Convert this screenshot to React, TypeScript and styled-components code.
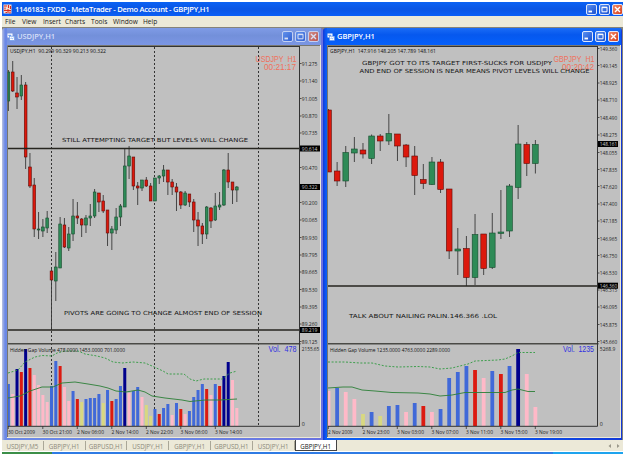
import React, { FC } from 'react';
import styled, { createGlobalStyle, css } from 'styled-components';

const GlobalStyle = createGlobalStyle`
  body {
    margin: 0;
    background: #ffffff;
    overflow: hidden;
    font-family: 'Open Sans', 'Liberation Sans', sans-serif;
  }
`;

const Screen = styled.div`
  box-sizing: border-box;
  width: 625px;
  height: 454px;
  padding: 2px 2px 0 2px;
  display: flex;
  flex-direction: column;
`;

const TitleBar = styled.header`
  height: 14px;
  flex: none;
  box-sizing: border-box;
  padding: 0 0 0 1px;
  display: flex;
  align-items: center;
  background: linear-gradient(#0a62f4, #0a55e4 50%, #0a5ff6);
`;

const AppTitle = styled.h1`
  flex: 1;
  margin: 0 0 0 3px;
  color: #ffffff;
  font-size: 7.6px;
  line-height: 14px;
  font-weight: 600;
  letter-spacing: -0.28px;
  white-space: pre;
`;

const MenuBar = styled.nav`
  height: 11px;
  flex: none;
  display: grid;
  grid-template-columns: 17px 21px 22px 26px 22px 30px 20px;
  padding-left: 3px;
  background: #ece9d8;
`;

const MenuItem = styled.span`
  color: #222222;
  font-size: 6.6px;
  line-height: 11px;
  white-space: nowrap;
`;

const Workspace = styled.main`
  box-sizing: border-box;
  width: 621px;
  height: 413px;
  flex: none;
  display: grid;
  grid-template-columns: 321px 299px;
  border-top: 1px solid #85837a;
  background: #85837a;
`;

const Window = styled.section<{ $active?: boolean }>`
  display: flex;
  flex-direction: column;
  min-width: 0;
  box-sizing: border-box;
  border-radius: 3px 3px 0 0;
  padding: ${({ $active }) => ($active ? '0 1px 0 4px' : '0 2px 0 5px')};
  ${({ $active }) => ($active ? css`
    background: linear-gradient(90deg, #1238d8, #0a5cf4 3px, #0a5cf4 50%, #1238d8);
  ` : css`
    background: linear-gradient(90deg, #b9c2e0, #6b88e6 3px, #6b88e6 50%, #6a72e0);
  `)}
`;

const WindowBar = styled.div<{ $active?: boolean }>`
  height: 17px;
  flex: none;
  box-sizing: border-box;
  padding-right: 2px;
  display: flex;
  align-items: center;
  color: ${({ $active }) => ($active ? '#ffffff' : '#d5dff8')};
  background: ${({ $active }) => ($active
    ? 'linear-gradient(#1b6cf6, #0658ee 40%, #0560fb)'
    : 'linear-gradient(#7f9be6, #7390da 45%, #7b96e4)')};
`;

const WindowTitle = styled.h2`
  flex: 1;
  margin: 0 0 0 2px;
  font-size: 7.5px;
  font-weight: 600;
  line-height: 17px;
  letter-spacing: -0.05px;
`;

const Controls = styled.div<{ $faded?: boolean }>`
  display: flex;
  gap: 2px;
  opacity: ${({ $faded }) => ($faded ? 0.72 : 1)};
`;

const ControlButton = styled.span<{ $close?: boolean }>`
  box-sizing: border-box;
  width: 11px;
  height: 11px;
  display: flex;
  border: 1px solid #dfe8fb;
  border-radius: 2px;
  background: ${({ $close }) => ($close
    ? 'linear-gradient(135deg, #f08a68, #d9401c)'
    : 'linear-gradient(135deg, #5a90f0, #1a50d0)')};
`;

const Canvas = styled.svg`
  display: block;
  flex: none;
  background: #c0c0c0;
  box-sizing: border-box;
  border-right: 1px solid #ece9d8;
  border-bottom: 1px solid #ece9d8;
`;

const AxisText = styled.text`
  font-family: 'Open Sans', 'Liberation Sans', sans-serif;
  font-size: 6.1px;
  white-space: pre;
`;

const NoteText = styled.text`
  font-family: 'DejaVu Sans', sans-serif;
  font-size: 5.6px;
  fill: #151515;
`;

const TagText = styled.text`
  font-family: 'Liberation Sans', sans-serif;
  font-size: 8.2px;
  white-space: pre;
`;

const TabBar = styled.footer`
  height: 11px;
  width: 621px;
  flex: none;
  display: flex;
  align-items: stretch;
  background: #ece9d8;
`;

const Tab = styled.span<{ $active?: boolean }>`
  box-sizing: border-box;
  width: ${({ $active }) => ($active ? 42 : 41.8)}px;
  font-size: 6.2px;
  line-height: 9px;
  padding-top: 1px;
  text-align: center;
  color: #8b8878;
  border-right: 1px solid #aaa797;
  margin: 1px 0;
  ${({ $active }) => $active && css`
    padding-top: 2px;
    margin: 0;
    color: #111111;
    background: #ffffff;
    border: 1px solid #444444;
    border-top: 0;
  `}
`;

const TabArrows = styled.span`
  flex: 1;
  display: flex;
  justify-content: flex-end;
  align-items: center;
  gap: 6px;
  padding-right: 3px;
`;

const TaskBar = styled.div`
  height: 2px;
  width: 621px;
  flex: none;
  margin-top: 1px;
  display: grid;
  grid-template-columns: 50px 501px 70px;
`;

const TaskPart = styled.i<{ $color: string }>`
  background: ${({ $color }) => $color};
`;

// [high, open/close top, open/close bottom, low, up]
type Candle = [number, number, number, number, 0 | 1];
type Bar = [string, number];
type Label = [string, number];
type Note = { text: string; x: number; y: number; width: number };

type ChartData = {
  left: number;
  right: number;
  axis: number;
  step: number;
  first: number;
  bodyWidth: number;
  candles: Candle[];
  bars: Bar[];
  prices: Label[];
  marked: Label[];
  dates: Label[];
  levels: number[];
  sessions: number[];
  average: string;
  band: string;
  header: Note;
  volume: Note;
  notes: Note[];
  symbol: Note;
  clock: Note;
  vol: Note;
};

const barColors: Record<string, string> = {
  b: '#4169d8',
  p: '#ffb9c8',
  n: '#00008c',
  r: '#dc1a10',
  y: '#d8d880',
};

const usdjpy: ChartData = {
  left: 7,
  right: 321,
  axis: 299.5,
  step: 4.31,
  first: 8.4,
  bodyWidth: 2.7,
  candles: [
    [70, 72, 101, 111, 1], [61, 72, 91, 92, 0], [77, 93, 97, 109, 0], [75, 85, 96, 100, 1],
    [82, 85, 157, 169, 0], [153, 167, 186, 188, 0], [178, 185, 229, 237, 0], [212, 229, 230, 239, 1],
    [219, 227, 231, 237, 1], [211, 218, 228, 233, 1], [267, 271, 280, 330, 0], [252, 267, 281, 301, 1],
    [217, 224, 268, 268, 1], [218, 225, 247, 248, 0], [227, 234, 248, 251, 1], [199, 216, 234, 241, 1],
    [202, 216, 218, 224, 0], [218, 219, 225, 237, 0], [215, 218, 225, 233, 1], [204, 216, 218, 226, 1],
    [189, 192, 216, 218, 1], [193, 193, 202, 212, 0], [195, 201, 211, 213, 0], [210, 210, 233, 246, 0],
    [226, 229, 233, 250, 1], [208, 217, 230, 234, 1], [204, 206, 217, 226, 1], [148, 166, 207, 207, 1],
    [146, 156, 166, 179, 1], [157, 157, 186, 190, 0], [182, 186, 188, 205, 0], [180, 180, 188, 191, 1],
    [177, 180, 186, 187, 0], [183, 186, 201, 201, 0], [178, 178, 201, 201, 1], [175, 176, 178, 184, 1],
    [165, 170, 176, 182, 1], [170, 170, 182, 195, 0], [179, 182, 187, 195, 0], [183, 187, 192, 211, 0],
    [191, 192, 205, 209, 0], [191, 193, 205, 206, 1], [194, 194, 202, 207, 0], [199, 202, 220, 232, 0],
    [212, 220, 226, 246, 0], [223, 226, 234, 244, 0], [206, 207, 234, 239, 1], [207, 208, 221, 228, 0],
    [193, 206, 220, 221, 1], [192, 205, 207, 210, 1], [169, 170, 205, 206, 1], [153, 170, 182, 188, 0],
    [182, 182, 190, 204, 0], [186, 187, 190, 202, 1],
  ],
  bars: [
    ['b', 384], ['p', 394], ['n', 369], ['r', 372], ['n', 349], ['r', 368], ['p', 375], ['p', 385],
    ['p', 395], ['p', 402], ['b', 386], ['b', 361], ['r', 366], ['p', 387], ['p', 401], ['b', 391],
    ['r', 399], ['y', 402], ['b', 399], ['b', 398], ['b', 398], ['b', 394], ['y', 403], ['b', 390],
    ['r', 401], ['b', 399], ['b', 386], ['n', 368], ['p', 393], ['b', 391], ['b', 387], ['p', 397],
    ['y', 405], ['y', 416], ['b', 409], ['r', 414], ['b', 408], ['b', 404], ['p', 415], ['b', 403],
    ['r', 409], ['p', 414], ['b', 411], ['b', 397], ['b', 390], ['b', 384], ['r', 389], ['p', 395],
    ['b', 384], ['r', 386], ['n', 376], ['n', 362], ['p', 380], ['p', 408],
  ],
  prices: [
    ['91.275', 63.5], ['91.140', 81], ['91.005', 98.5], ['90.870', 116], ['90.735', 133],
    ['90.470', 167.5], ['90.200', 202.5], ['90.065', 220], ['89.930', 237.5], ['89.795', 255],
    ['89.665', 272], ['89.530', 289.5], ['89.395', 307], ['89.260', 324], ['89.125', 341.5],
    ['2155.65', 348.5], ['0', 423.5],
  ],
  marked: [['90.614', 148.5], ['90.322', 187], ['89.219', 330]],
  dates: [
    ['30 Oct 2009', 8], ['30 Oct 21:00', 42.5], ['2 Nov 06:00', 77], ['2 Nov 14:00', 111.5],
    ['2 Nov 22:00', 146], ['3 Nov 06:00', 180.5], ['3 Nov 14:00', 215],
  ],
  levels: [148.6, 330],
  sessions: [51.5, 154.5, 258.5],
  average: '8,398 20,396 30,391 42,387 53,387 62,383 75,382 88,384 100,386 108,388 116,391 126,392 138,390 145,392 152,396 165,398 182,400 190,401.5 205,400 220,400 237,399',
  band: '8,373 18,370 25,362 35,357 42,355.5 52,356 57,353 65,351 78,351 85,354 97,356 105,358 113,362 122,363 133,362 145,363 152,366 163,371 168,374 184,374 190,379 196,381 204,379 222,379 230,373 237,371',
  header: { text: 'USDJPY,H1  90.299 90.329 90.213 90.322', x: 10, y: 51, width: 96 },
  volume: { text: 'Hidden Gap Volume 478.0000 1453.0000 701.0000', x: 10, y: 349.8, width: 115 },
  notes: [
    { text: 'STILL ATTEMPTING TARGET BUT LEVELS WILL CHANGE', x: 62, y: 140, width: 186 },
    { text: 'PIVOTS ARE GOING TO CHANGE ALMOST END OF SESSION', x: 64, y: 312.8, width: 198 },
  ],
  symbol: { text: 'USDJPY  H1', x: 255.5, y: 59.4, width: 41 },
  clock: { text: '00:21:17', x: 264, y: 67.8, width: 32 },
  vol: { text: 'Vol.  478', x: 268.5, y: 349.3, width: 28 },
};

const gbpjpy: ChartData = {
  left: 327,
  right: 621,
  axis: 597.5,
  step: 8.62,
  first: 328.5,
  bodyWidth: 5.7,
  candles: [
    [109, 110, 172, 172, 0], [162, 171, 181, 186, 0], [146, 152.5, 181, 187, 1], [137, 149, 153, 162, 1],
    [143, 150, 154, 158.5, 0], [134.5, 136, 158.5, 164, 1], [134, 136, 141, 151, 0], [114, 133.5, 141, 145, 1],
    [134, 134, 146, 161, 0], [144, 145, 157, 167, 0], [146, 156, 175.5, 195, 0], [164, 179.5, 183.5, 189, 0],
    [157, 162, 184.5, 185, 1], [159, 162, 189.5, 193, 0], [189, 189, 251, 259, 0], [228, 249, 251, 275, 1],
    [236, 248.5, 277.5, 286, 0], [214, 234.5, 277.5, 285, 1], [234, 234, 268.5, 275, 0], [213, 233, 267.5, 269, 1],
    [190, 232, 233.5, 239, 1], [184, 186, 231, 237, 1], [125, 144, 187.5, 199, 1], [142, 144.5, 163.5, 176, 0],
    [140, 144.5, 163.5, 173.5, 1],
  ],
  bars: [
    ['p', 391], ['b', 388], ['p', 392], ['p', 399], ['y', 414], ['b', 412], ['y', 416], ['b', 406],
    ['b', 405], ['p', 412], ['b', 403], ['r', 406], ['p', 412], ['b', 409], ['b', 378], ['b', 372],
    ['b', 366], ['r', 370], ['p', 378], ['b', 371], ['r', 374], ['b', 366], ['n', 349], ['p', 374],
    ['p', 407],
  ],
  prices: [
    ['149.360', 48.5], ['149.145', 65.5], ['148.925', 83], ['148.710', 100], ['148.490', 117.5],
    ['148.275', 135], ['148.055', 152.5], ['147.835', 169.5], ['147.620', 186.5], ['147.400', 204],
    ['147.185', 221], ['146.965', 238.5], ['146.750', 255.5], ['146.530', 273], ['146.315', 290],
    ['146.095', 307], ['145.875', 324.5], ['145.660', 341.5], ['5268.9', 348.5], ['0', 423.5],
  ],
  marked: [['148.161', 144], ['146.360', 285.7]],
  dates: [
    ['2 Nov 2009', 328], ['2 Nov 23:00', 362.5], ['3 Nov 03:00', 397], ['3 Nov 07:00', 431.5],
    ['3 Nov 11:00', 466], ['3 Nov 15:00', 500.5], ['3 Nov 19:00', 535],
  ],
  levels: [286],
  sessions: [],
  average: '328,388 343,387 352,387 362,390 375,391 392,392.5 418,393 430,394 440,396 452,395 465,392.5 505,392.5 512,390 518,389 528,391.5 535,391.5',
  band: '328,362 345,362 360,363 372,363 385,366 398,367 418,366.5 430,367 440,369 452,368 460,366 468,364 475,361 498,360 505,359 512,356 518,352.5 535,352.5',
  header: { text: 'GBPJPY,H1  147.916 148.205 147.789 148.161', x: 330, y: 51, width: 106 },
  volume: { text: 'Hidden Gap Volume 1235.0000 4763.0000 2289.0000', x: 330, y: 349.8, width: 120 },
  notes: [
    { text: 'GBPJPY GOT TO ITS TARGET FIRST-SUCKS FOR USDJPY', x: 362, y: 62.8, width: 190 },
    { text: 'AND END OF SESSION IS NEAR MEANS PIVOT LEVELS WILL CHANGE', x: 359.5, y: 71.4, width: 230 },
    { text: 'TALK ABOUT NAILING PALIN.146.366 .LOL', x: 349, y: 316, width: 148 },
  ],
  symbol: { text: 'GBPJPY  H1', x: 553.5, y: 59.4, width: 41 },
  clock: { text: '00:20:42', x: 562, y: 67.8, width: 32 },
  vol: { text: 'Vol.  1235', x: 563, y: 349.3, width: 31 },
};

const Chart: FC<{ data: ChartData }> = ({ data }) => {
  const {
    left, right, axis, step, first, bodyWidth,
  } = data;
  const barWidth = bodyWidth > 3 ? 3.8 : 3;
  const labelWidth = (text: string) => (text === '0' ? 3 : Math.min(text.length * 2.6, 17.4));

  return (
    <Canvas
      width={right - left}
      height={393}
      viewBox={`${left} 45 ${right - left - 1} 392`}>
      <path d={`M${left + 0.5} 437V45.5H${right}`} fill='none' stroke='#77776f' />
      <path d={`M${left + 1} 46.5H${axis}`} stroke='#333333' />
      {data.sessions.map((x) => (
        <path key={x} d={`M${x} 47V426`} stroke='#333333' strokeDasharray='2 2' />
      ))}
      {data.bars.map(([color, top], i) => {
        const x = first + i * step;
        const start = Math.max(left + 1, x - barWidth / 2);
        return (
          <rect key={x} x={start} y={top} width={x + barWidth / 2 - start} height={426 - top} fill={barColors[color]} />
        );
      })}
      <polyline points={data.average} fill='none' stroke='#2b7f37' strokeWidth={0.9} />
      <polyline points={data.band} fill='none' stroke='#2f9a3f' strokeWidth={0.9} strokeDasharray='2 1.6' />
      {data.candles.map(([high, top, bottom, low, up], i) => {
        const x = first + i * step;
        const start = Math.max(left + 1, x - bodyWidth / 2);
        return (
          <g key={x}>
            <path d={`M${x} ${high}V${low}`} stroke='#383838' strokeWidth={0.9} />
            <rect
              x={start}
              y={top}
              width={x + bodyWidth / 2 - start}
              height={Math.max(bottom - top, 1)}
              fill={up ? '#2e8b57' : '#dc180c'}
              stroke={up ? '#164a2c' : '#5e0c08'}
              strokeWidth={0.6} />
          </g>
        );
      })}
      {data.levels.map((y) => (
        <path key={y} d={`M${left + 1} ${y}H${axis}`} stroke='#26251f' strokeWidth={1.5} />
      ))}
      <path d={`M${left + 1} 343.7H${axis + 1}`} stroke='#4a4a46' strokeWidth={1.6} />
      <path d={`M${axis} 46V426.3H${left + 1}`} fill='none' stroke='#333333' />
      {data.prices.map(([text, y]) => (
        <g key={text}>
          {y < 342 && <path d={`M${axis} ${y}h2`} stroke='#333333' strokeWidth={0.8} />}
          <AxisText x={axis + 2.3} y={y + 2.2} textLength={labelWidth(text)} lengthAdjust='spacingAndGlyphs' fill='#222222'>
            {text}
          </AxisText>
        </g>
      ))}
      {data.marked.map(([text, y]) => (
        <g key={text}>
          <rect x={axis + 0.5} y={y - 3} width={20} height={6} fill='#000000' />
          <AxisText x={axis + 2.3} y={y + 2.2} textLength={labelWidth(text)} lengthAdjust='spacingAndGlyphs' fill='#c8c8c8'>
            {text}
          </AxisText>
        </g>
      ))}
      {data.dates.map(([text, x]) => (
        <g key={text}>
          <path d={`M${x + 0.3} 426v3`} stroke='#333333' strokeWidth={0.8} />
          <AxisText x={x} y={433.6} textLength={text.length * 2.45} lengthAdjust='spacingAndGlyphs' fill='#222222'>
            {text}
          </AxisText>
        </g>
      ))}
      {[data.header, data.volume].map((note) => (
        <AxisText key={note.text} x={note.x} y={note.y + 1.9} textLength={note.width} lengthAdjust='spacingAndGlyphs' fill='#111111'>
          {note.text}
        </AxisText>
      ))}
      {[data.symbol, data.clock].map((note) => (
        <TagText key={note.text} x={note.x} y={note.y + 2.4} textLength={note.width} lengthAdjust='spacingAndGlyphs' fill='#f0705c'>
          {note.text}
        </TagText>
      ))}
      <TagText x={data.vol.x} y={data.vol.y + 3} textLength={data.vol.width} lengthAdjust='spacingAndGlyphs' fill='#3030e0'>
        {data.vol.text}
      </TagText>
      {data.notes.map((note) => (
        <NoteText key={note.text} x={note.x} y={note.y + 2} textLength={note.width} lengthAdjust='spacingAndGlyphs'>
          {note.text}
        </NoteText>
      ))}
    </Canvas>
  );
};

const WindowControls: FC<{ faded?: boolean }> = ({ faded }) => (
  <Controls $faded={faded}>
    <ControlButton>
      <svg width='9' height='9' viewBox='0 0 9 9'><path d='M1.5 6.5h3.5' stroke='#fff' strokeWidth='1.8' /></svg>
    </ControlButton>
    <ControlButton>
      <svg width='9' height='9' viewBox='0 0 9 9'>
        <path d='M2 2.2h5v4.6H2zM2 2.6h5' fill='none' stroke='#fff' />
      </svg>
    </ControlButton>
    <ControlButton $close>
      <svg width='9' height='9' viewBox='0 0 9 9'><path d='M2 2l5 5M7 2L2 7' stroke='#fff' strokeWidth='1.4' /></svg>
    </ControlButton>
  </Controls>
);

const ChartIcon: FC = () => (
  <svg width='8' height='8' viewBox='0 0 8 8'>
    <rect x='0.5' y='0.5' width='5' height='4' fill='#ffffff' />
    <path d='M1.3 2.3h3' stroke='#4a86e8' />
    <rect x='2.5' y='3.2' width='5' height='4.3' fill='#ffffff' stroke='#4a86e8' strokeWidth='0.5' />
    <path d='M3.5 6l1-1 1 .8 1-1.2' fill='none' stroke='#4a86e8' strokeWidth='0.6' />
  </svg>
);

const AppIcon: FC = () => (
  <svg width='9' height='10' viewBox='0 0 9 10'>
    <rect x='0.5' y='0.5' width='8' height='9' fill='#f3d9d0' />
    <path d='M1 2h3M5.5 1v3M2 3.5v2M7.5 2v3M1 6.5h7M2.5 8.5h1.5M5 5v4M7 7.5v2' stroke='#dc2c1c' strokeWidth='1.1' />
  </svg>
);

const menu = ['File', 'View', 'Insert', 'Charts', 'Tools', 'Window', 'Help'];
const tabs = ['USDJPY,M5', 'GBPJPY,H1', 'GBPUSD,H1', 'USDJPY,H1', 'GBPJPY,H1', 'GBPUSD,H1', 'USDJPY,H1', 'GBPJPY,H1'];

const App: FC = () => (
  <Screen>
    <GlobalStyle />
    <TitleBar>
      <AppIcon />
      <AppTitle>1146183: FXDD - MetaTrader - Demo Account - GBPJPY,H1</AppTitle>
      <WindowControls />
    </TitleBar>
    <MenuBar>
      {menu.map((item) => <MenuItem key={item}>{item}</MenuItem>)}
    </MenuBar>
    <Workspace>
      <Window>
        <WindowBar>
          <ChartIcon />
          <WindowTitle>USDJPY,H1</WindowTitle>
          <WindowControls faded />
        </WindowBar>
        <Chart data={usdjpy} />
      </Window>
      <Window $active>
        <WindowBar $active>
          <ChartIcon />
          <WindowTitle>GBPJPY,H1</WindowTitle>
          <WindowControls />
        </WindowBar>
        <Chart data={gbpjpy} />
      </Window>
    </Workspace>
    <TabBar>
      {tabs.map((tab, i) => (
        <Tab key={`${tab}${i + 1}`} $active={i === tabs.length - 1}>{tab}</Tab>
      ))}
      <TabArrows>
        <svg width='3' height='4' viewBox='0 0 3 4'><path d='M3 0v4L0.5 2z' fill='#9a988a' /></svg>
        <svg width='3' height='4' viewBox='0 0 3 4'><path d='M0 0v4L2.5 2z' fill='#9a988a' /></svg>
      </TabArrows>
    </TabBar>
    <TaskBar>
      <TaskPart $color='#3c8f48' />
      <TaskPart $color='#2f7be4' />
      <TaskPart $color='#1ea4ee' />
    </TaskBar>
  </Screen>
);

export default App;
